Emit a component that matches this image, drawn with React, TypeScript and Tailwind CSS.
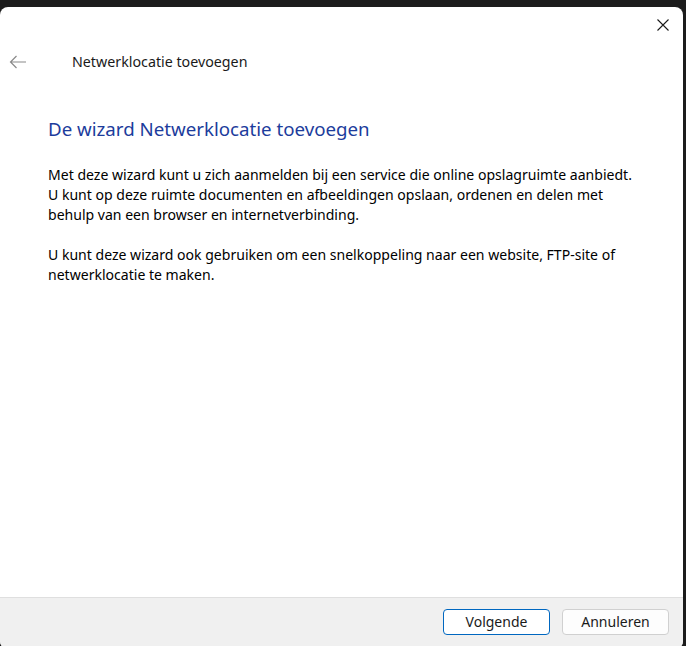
import React from 'react';

const BackArrow = () => (
  <svg width="18" height="14" viewBox="0 0 18 14" fill="none" stroke="#8a8a8a" strokeWidth="1.2">
    <path d="M17 7H1.5M7.5 1L1.5 7l6 6" />
  </svg>
);

const CloseIcon = () => (
  <svg width="12" height="12" viewBox="0 0 12 12" fill="none" stroke="#1a1a1a" strokeWidth="1.1">
    <path d="M0.5 0.5l11 11M11.5 0.5l-11 11" />
  </svg>
);

export default function App() {
  return (
    <div
      className="w-[686px] h-[646px] bg-[#1c1c1c] pt-[7px] overflow-hidden"
      style={{ fontFamily: '"Noto Sans", "Open Sans", sans-serif' }}
    >
      <div className="w-[683px] h-[642px] bg-white rounded-lg overflow-hidden flex flex-col">
        <div className="flex justify-end pr-[14px] pt-[12px] h-[36px]">
          <CloseIcon />
        </div>

        <div className="flex items-center h-[38px]">
          <div className="w-[72px] pl-[9px] flex items-center">
            <BackArrow />
          </div>
          <span className="text-[14.25px] text-[#1a1a1a]">Netwerklocatie toevoegen</span>
        </div>

        <div className="flex-1 px-[48px] pt-[35px] whitespace-nowrap">
          <h1 className="text-[18.7px] leading-[26px] text-[#1c3c9c]">
            De wizard Netwerklocatie toevoegen
          </h1>
          <p className="mt-[23px] text-[14.05px] leading-[20px] text-black">
            Met deze wizard kunt u zich aanmelden bij een service die online opslagruimte aanbiedt.
            <br />
            U kunt op deze ruimte documenten en afbeeldingen opslaan, ordenen en delen met
            <br />
            behulp van een browser en internetverbinding.
          </p>
          <p className="mt-[20px] text-[14.05px] leading-[20px] text-black">
            U kunt deze wizard ook gebruiken om een snelkoppeling naar een website, FTP-site of
            <br />
            netwerklocatie te maken.
          </p>
        </div>

        <div className="h-[52px] shrink-0 bg-[#f0f0f0] border-t border-[#dfdfdf] flex justify-end items-start gap-[12px] pt-[11px] pr-[14px]">
          <button className="w-[107px] h-[26px] rounded-[4px] border border-[#0067c0] bg-white text-[14px] text-[#1a1a1a] leading-none">
            Volgende
          </button>
          <button className="w-[107px] h-[26px] rounded-[4px] border border-[#d0d0d0] bg-[#fdfdfd] text-[14px] text-[#1a1a1a] leading-none">
            Annuleren
          </button>
        </div>
      </div>
    </div>
  );
}
